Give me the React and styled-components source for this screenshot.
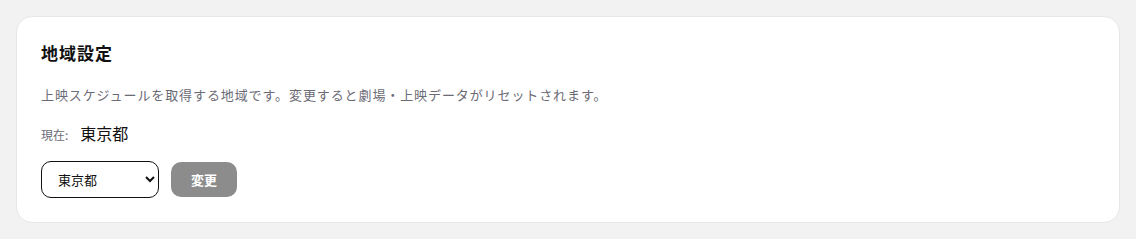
import React from "react";
import styled, { createGlobalStyle } from "styled-components";

const Global = createGlobalStyle`
	html, body {
		margin: 0;
		padding: 0;
		background: #f2f2f2;
		font-family: "Noto Sans CJK JP", "Noto Sans", sans-serif;
	}
`;

const Page = styled.div`
	padding: 16px;
`;

const Card = styled.section`
	background: #fff;
	border: 1px solid #e6e6e6;
	border-radius: 16px;
	padding: 24px;
	display: flex;
	flex-direction: column;
`;

const Title = styled.h2`
	margin: 0;
	font-size: 17px;
	letter-spacing: 1px;
	line-height: 24px;
	font-weight: 700;
	color: #111;
`;

const Description = styled.p`
	margin: 20px 0 0;
	font-size: 13px;
	letter-spacing: 0.9px;
	line-height: 20px;
	color: #6b6b76;
`;

const Current = styled.div`
	margin-top: 16px;
	display: flex;
	align-items: baseline;
	gap: 12px;
	& > span {
		font-size: 12px;
		color: #6b6b76;
	}
	& > strong {
		font-size: 16px;
		font-weight: 400;
		color: #111;
	}
`;

const Controls = styled.div`
	margin-top: 16px;
	display: flex;
	align-items: center;
	gap: 12px;
`;

const Select = styled.select`
	width: 118px;
	height: 37px;
	padding: 0 8px 0 12px;
	border: 1px solid #111;
	border-radius: 10px;
	background: #fff;
	font-family: inherit;
	font-size: 13px;
	color: #111;
`;

const Button = styled.button`
	width: 66px;
	height: 35px;
	border: none;
	border-radius: 10px;
	background: #8c8c8c;
	color: #fff;
	font-family: inherit;
	font-size: 13px;
	font-weight: 700;
`;

function App() {
	return (
		<Page>
			<Global />
			<Card>
				<Title>地域設定</Title>
				<Description>
					上映スケジュールを取得する地域です。変更すると劇場・上映データがリセットされます。
				</Description>
				<Current>
					<span>現在:</span>
					<strong>東京都</strong>
				</Current>
				<Controls>
					<Select defaultValue="東京都">
						<option>北海道</option>
						<option>東京都</option>
						<option>大阪府</option>
					</Select>
					<Button disabled>変更</Button>
				</Controls>
			</Card>
		</Page>
	);
}

export default App;
